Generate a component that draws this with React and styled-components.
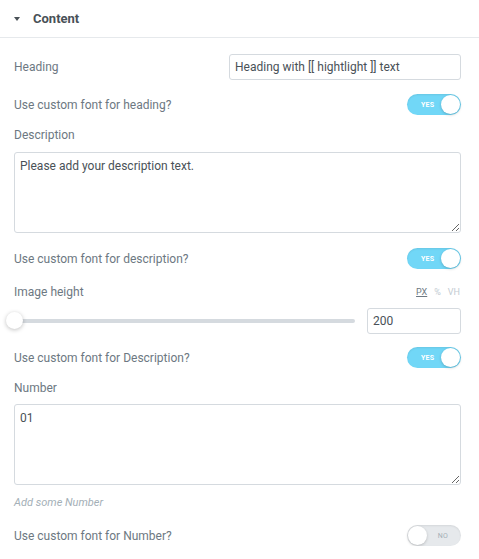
import styled, { createGlobalStyle } from 'styled-components';

const GlobalStyle = createGlobalStyle`
  body {
    margin: 0;
    background: #ffffff;
    font-family: Roboto, "Liberation Sans", Arial, sans-serif;
    -webkit-font-smoothing: antialiased;
  }
`;

const Panel = styled.div`
  width: 479px;
  background: #ffffff;
`;

const SectionHeader = styled.div`
  display: flex;
  align-items: center;
  height: 38px;
  padding: 0 14px;
  border-bottom: 1px solid #e6e9ec;
  box-sizing: border-box;
  font-size: 13px;
  font-weight: 700;
  color: #495157;
`;

const Caret = styled.span`
  width: 0;
  height: 0;
  border-left: 3.5px solid transparent;
  border-right: 3.5px solid transparent;
  border-top: 4px solid #495157;
  margin: 1px 13px 0 0;
`;

const Body = styled.div`
  display: flex;
  flex-direction: column;
  padding: 16px 18px 0 14px;
`;

const Control = styled.div`
  display: flex;
  flex-direction: ${({ $stack }) => ($stack ? 'column' : 'row')};
  align-items: ${({ $stack }) => ($stack ? 'stretch' : 'center')};
  justify-content: space-between;
  margin-top: ${({ $mt }) => $mt || 0}px;
  gap: ${({ $gap }) => $gap || 0}px;
`;

const Label = styled.label`
  font-size: 12px;
  line-height: 16px;
  color: #6d7882;
`;

const TextInput = styled.input`
  width: 232px;
  height: 26px;
  box-sizing: border-box;
  border: 1px solid #d5dadf;
  border-radius: 3px;
  padding: 0 5px;
  font-family: inherit;
  font-size: 12px;
  color: #495157;
  outline: none;
`;

const TextArea = styled.textarea`
  display: block;
  width: 100%;
  height: ${({ $h }) => $h}px;
  box-sizing: border-box;
  border: 1px solid #d5dadf;
  border-radius: 3px;
  padding: 5px 5px;
  font-family: inherit;
  font-size: 12px;
  line-height: 16px;
  color: #495157;
  outline: none;
`;

const Switch = styled.div`
  position: relative;
  width: 54px;
  height: 21px;
  box-sizing: border-box;
  border-radius: 11px;
  background: ${({ $on }) => ($on ? '#71d7f7' : '#e6e9ec')};
  box-shadow: inset 0 1px 2px rgba(0, 0, 0, 0.08);
  display: flex;
  align-items: center;
  justify-content: ${({ $on }) => ($on ? 'flex-start' : 'flex-end')};
  padding: ${({ $on }) => ($on ? '0 0 0 14px' : '0 13px 0 0')};
  font-size: 7px;
  letter-spacing: 0.2px;
  color: ${({ $on }) => ($on ? '#ffffff' : '#a4afb7')};
  font-weight: ${({ $on }) => ($on ? 700 : 400)};

  &::after {
    content: '';
    position: absolute;
    top: 1px;
    ${({ $on }) => ($on ? 'right: 1px;' : 'left: 1px;')}
    width: 19px;
    height: 19px;
    border-radius: 50%;
    background: #ffffff;
    box-shadow: 0 1px 3px rgba(0, 0, 0, 0.2);
  }
`;

const LabelRow = styled.div`
  display: flex;
  align-items: center;
  justify-content: space-between;
`;

const Units = styled.div`
  display: flex;
  gap: 7px;
  font-size: 9px;
  padding-right: 1px;
`;

const Unit = styled.span`
  color: ${({ $active }) => ($active ? '#6d7882' : '#c2cbd2')};
  text-decoration: ${({ $active }) => ($active ? 'underline' : 'none')};
`;

const SliderRow = styled.div`
  display: flex;
  align-items: center;
  gap: 12px;
`;

const Track = styled.div`
  position: relative;
  flex: 1;
  height: 4px;
  background: #d5dadf;
  border-radius: 2px;
`;

const Thumb = styled.span`
  position: absolute;
  left: -8px;
  top: -7px;
  width: 17px;
  height: 17px;
  border-radius: 50%;
  background: #ffffff;
  box-shadow: 0 1px 4px rgba(0, 0, 0, 0.25);
`;

const NumberInput = styled(TextInput)`
  width: 94px;
`;

const Help = styled.div`
  margin-top: 11px;
  font-size: 11px;
  line-height: 14px;
  font-style: italic;
  color: #a4afb7;
`;

const Toggle = ({ on }) => <Switch $on={on}>{on ? 'YES' : 'NO'}</Switch>;

const App = () => {
  return (
    <>
      <GlobalStyle />
      <Panel>
        <SectionHeader>
          <Caret />
          Content
        </SectionHeader>
        <Body>
          <Control>
            <Label>Heading</Label>
            <TextInput defaultValue="Heading with [[ hightlight ]] text" />
          </Control>
          <Control $mt={14}>
            <Label>Use custom font for heading?</Label>
            <Toggle on />
          </Control>
          <Control $stack $gap={9} $mt={12}>
            <Label>Description</Label>
            <TextArea $h={81} defaultValue="Please add your description text." />
          </Control>
          <Control $mt={15}>
            <Label>Use custom font for description?</Label>
            <Toggle on />
          </Control>
          <Control $stack $gap={8} $mt={15}>
            <LabelRow>
              <Label>Image height</Label>
              <Units>
                <Unit $active>PX</Unit>
                <Unit>%</Unit>
                <Unit>VH</Unit>
              </Units>
            </LabelRow>
            <SliderRow>
              <Track>
                <Thumb />
              </Track>
              <NumberInput defaultValue="200" />
            </SliderRow>
          </Control>
          <Control $mt={13}>
            <Label>Use custom font for Description?</Label>
            <Toggle on />
          </Control>
          <Control $stack $gap={8} $mt={12}>
            <Label>Number</Label>
            <TextArea $h={81} defaultValue="01" />
          </Control>
          <Help>Add some Number</Help>
          <Control $mt={15}>
            <Label>Use custom font for Number?</Label>
            <Toggle on={false} />
          </Control>
        </Body>
      </Panel>
    </>
  );
};

export default App;
